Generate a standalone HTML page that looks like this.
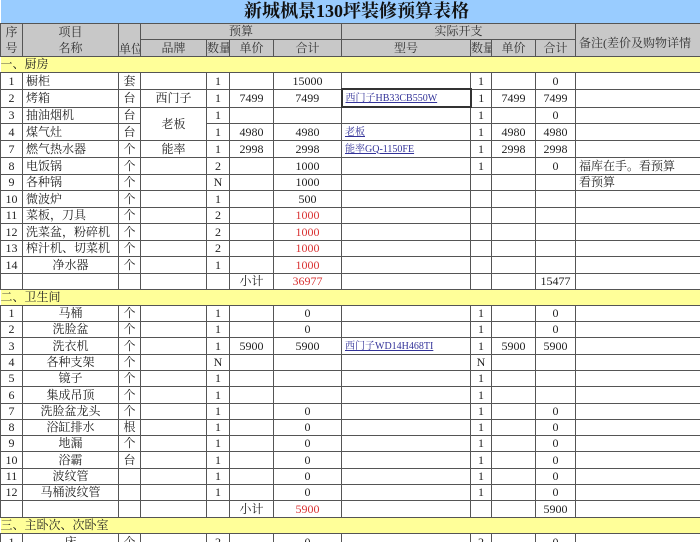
<!DOCTYPE html>
<html><head><meta charset="utf-8">
<style>
html,body{margin:0;padding:0;background:#fff;width:700px;height:542px;overflow:hidden}
table{border-collapse:collapse;table-layout:fixed;width:700px;font-family:"Liberation Serif","Noto Serif CJK SC",serif;font-size:12px;color:#222}
td{border:1px solid #555;padding:0;white-space:nowrap;overflow:hidden;text-align:center;line-height:14px}
.l{text-align:left;padding-left:3px}
.title{background:#99ccff;font-size:18px;font-weight:bold;border:none;border-bottom:1px solid #555;text-align:center;padding-left:12px;color:#111}
.h{background:#c8c8c8;color:#333}
.sec{background:#ffff99;text-align:left;border-left:none;border-right:none}
.r{color:#d93333}
a{color:#333399;font-size:10px;text-decoration:underline}
.box{border:2px solid #333}
</style></head><body>
<table>
<colgroup><col style="width:22px"><col style="width:96px"><col style="width:22px"><col style="width:66px"><col style="width:23px"><col style="width:44px"><col style="width:68px"><col style="width:129px"><col style="width:21px"><col style="width:44px"><col style="width:40px"><col style="width:125px"></colgroup>
<tr style="height:23px"><td class="title" colspan="12">新城枫景130坪装修预算表格</td></tr>
<tr style="height:16px" class="h"><td class="h" rowspan="2" style="line-height:16px">序<br>号</td><td class="h" rowspan="2" style="line-height:16px">项目<br>名称</td><td class="h" rowspan="2" style="vertical-align:bottom">单位</td><td class="h" colspan="4">预算</td><td class="h" colspan="4">实际开支</td><td class="h l" rowspan="2" style="padding-top:6px">备注(差价及购物详情</td></tr>
<tr style="height:17px"><td class="h">品牌</td><td class="h">数量</td><td class="h">单价</td><td class="h">合计</td><td class="h">型号</td><td class="h">数量</td><td class="h">单价</td><td class="h">合计</td></tr>
<tr style="height:16px"><td class="sec" colspan="12">一、厨房</td></tr>
<tr style="height:17px"><td>1</td><td class="l">橱柜</td><td>套</td><td></td><td>1</td><td></td><td>15000</td><td></td><td>1</td><td></td><td>0</td><td></td></tr>
<tr style="height:17px"><td>2</td><td class="l">烤箱</td><td>台</td><td>西门子</td><td>1</td><td>7499</td><td>7499</td><td class="l box"><a>西门子HB33CB550W</a></td><td>1</td><td>7499</td><td>7499</td><td></td></tr>
<tr style="height:16px"><td>3</td><td class="l">抽油烟机</td><td>台</td><td rowspan="2">老板</td><td>1</td><td></td><td></td><td></td><td>1</td><td></td><td>0</td><td></td></tr>
<tr style="height:17px"><td>4</td><td class="l">煤气灶</td><td>台</td><td>1</td><td>4980</td><td>4980</td><td class="l"><a>老板</a></td><td>1</td><td>4980</td><td>4980</td><td></td></tr>
<tr style="height:16px"><td>7</td><td class="l">燃气热水器</td><td>个</td><td>能率</td><td>1</td><td>2998</td><td>2998</td><td class="l"><a>能率GQ-1150FE</a></td><td>1</td><td>2998</td><td>2998</td><td></td></tr>
<tr style="height:17px"><td>8</td><td class="l">电饭锅</td><td>个</td><td></td><td>2</td><td></td><td>1000</td><td></td><td>1</td><td></td><td>0</td><td class="l">福库在手。看预算</td></tr>
<tr style="height:16px"><td>9</td><td class="l">各种锅</td><td>个</td><td></td><td>N</td><td></td><td>1000</td><td></td><td></td><td></td><td></td><td class="l">看预算</td></tr>
<tr style="height:17px"><td>10</td><td class="l">微波炉</td><td>个</td><td></td><td>1</td><td></td><td>500</td><td></td><td></td><td></td><td></td><td></td></tr>
<tr style="height:16px"><td>11</td><td class="l">菜板，刀具</td><td>个</td><td></td><td>2</td><td></td><td class="r">1000</td><td></td><td></td><td></td><td></td><td></td></tr>
<tr style="height:17px"><td>12</td><td class="l">洗菜盆，粉碎机</td><td>个</td><td></td><td>2</td><td></td><td class="r">1000</td><td></td><td></td><td></td><td></td><td></td></tr>
<tr style="height:16px"><td>13</td><td class="l">榨汁机、切菜机</td><td>个</td><td></td><td>2</td><td></td><td class="r">1000</td><td></td><td></td><td></td><td></td><td></td></tr>
<tr style="height:17px"><td>14</td><td>净水器</td><td>个</td><td></td><td>1</td><td></td><td class="r">1000</td><td></td><td></td><td></td><td></td><td></td></tr>
<tr style="height:16px"><td></td><td></td><td></td><td></td><td></td><td>小计</td><td class="r">36977</td><td></td><td></td><td></td><td>15477</td><td></td></tr>
<tr style="height:16px"><td class="sec" colspan="12">二、卫生间</td></tr>
<tr style="height:16px"><td>1</td><td>马桶</td><td>个</td><td></td><td>1</td><td></td><td>0</td><td></td><td>1</td><td></td><td>0</td><td></td></tr>
<tr style="height:16px"><td>2</td><td>洗脸盆</td><td>个</td><td></td><td>1</td><td></td><td>0</td><td></td><td>1</td><td></td><td>0</td><td></td></tr>
<tr style="height:17px"><td>3</td><td>洗衣机</td><td>个</td><td></td><td>1</td><td>5900</td><td>5900</td><td class="l"><a>西门子WD14H468TI</a></td><td>1</td><td>5900</td><td>5900</td><td></td></tr>
<tr style="height:16px"><td>4</td><td>各种支架</td><td>个</td><td></td><td>N</td><td></td><td></td><td></td><td>N</td><td></td><td></td><td></td></tr>
<tr style="height:16px"><td>5</td><td>镜子</td><td>个</td><td></td><td>1</td><td></td><td></td><td></td><td>1</td><td></td><td></td><td></td></tr>
<tr style="height:17px"><td>6</td><td>集成吊顶</td><td>个</td><td></td><td>1</td><td></td><td></td><td></td><td>1</td><td></td><td></td><td></td></tr>
<tr style="height:16px"><td>7</td><td>洗脸盆龙头</td><td>个</td><td></td><td>1</td><td></td><td>0</td><td></td><td>1</td><td></td><td>0</td><td></td></tr>
<tr style="height:16px"><td>8</td><td>浴缸排水</td><td>根</td><td></td><td>1</td><td></td><td>0</td><td></td><td>1</td><td></td><td>0</td><td></td></tr>
<tr style="height:16px"><td>9</td><td>地漏</td><td>个</td><td></td><td>1</td><td></td><td>0</td><td></td><td>1</td><td></td><td>0</td><td></td></tr>
<tr style="height:17px"><td>10</td><td>浴霸</td><td>台</td><td></td><td>1</td><td></td><td>0</td><td></td><td>1</td><td></td><td>0</td><td></td></tr>
<tr style="height:16px"><td>11</td><td>波纹管</td><td></td><td></td><td>1</td><td></td><td>0</td><td></td><td>1</td><td></td><td>0</td><td></td></tr>
<tr style="height:16px"><td>12</td><td>马桶波纹管</td><td></td><td></td><td>1</td><td></td><td>0</td><td></td><td>1</td><td></td><td>0</td><td></td></tr>
<tr style="height:17px"><td></td><td></td><td></td><td></td><td></td><td>小计</td><td class="r">5900</td><td></td><td></td><td></td><td>5900</td><td></td></tr>
<tr style="height:16px"><td class="sec" colspan="12">三、主卧次、次卧室</td></tr>
<tr style="height:17px"><td>1</td><td>床</td><td>个</td><td></td><td>2</td><td></td><td>0</td><td></td><td>2</td><td></td><td>0</td><td></td></tr>
</table>
</body></html>
